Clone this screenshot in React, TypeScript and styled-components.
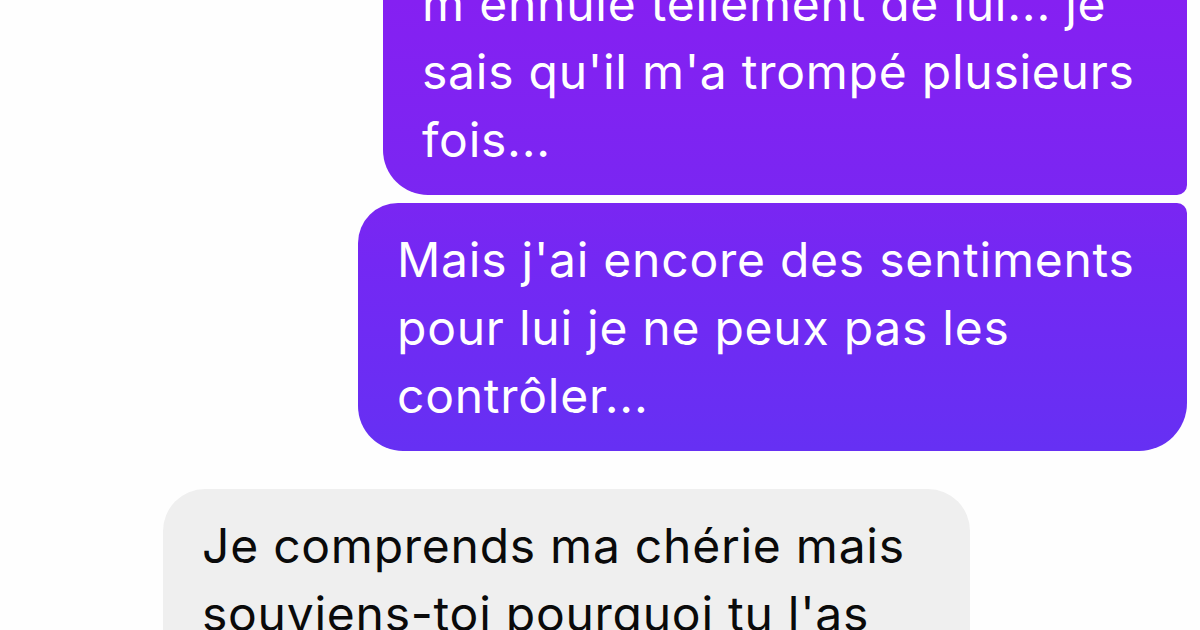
import styled, { createGlobalStyle } from 'styled-components'

const GlobalStyle = createGlobalStyle`
  html, body {
    margin: 0;
    padding: 0;
    background: #fefefe;
  }
  body {
    font-family: Inter, 'Noto Sans', 'Liberation Sans', sans-serif;
    -webkit-font-smoothing: antialiased;
  }
`

const Screen = styled.div`
  width: 1200px;
  height: 630px;
  overflow: hidden;
  background: #fefefe;
`

const Thread = styled.div`
  display: flex;
  flex-direction: column;
  margin-top: -53px;
  padding: 0 13px 0 163px;
`

const Row = styled.div<{ $mine?: boolean; $gap: number }>`
  display: flex;
  justify-content: ${(p) => (p.$mine ? 'flex-end' : 'flex-start')};
  margin-top: ${(p) => p.$gap}px;
`

const Bubble = styled.div<{ $mine?: boolean; $width: number; $radius: string }>`
  box-sizing: border-box;
  width: ${(p) => p.$width}px;
  padding: 23px 0 21px 39px;
  border-radius: ${(p) => p.$radius};
  font-size: 48px;
  line-height: 68px;
  font-weight: 400;
  letter-spacing: 0.75px;
  color: ${(p) => (p.$mine ? '#ffffff' : '#0a0a0a')};
  background: ${(p) =>
    p.$mine
      ? 'linear-gradient(180deg, #8520f2 0px, #7a26f2 200px, #7428f3 260px, #6630f3 450px) fixed'
      : '#efefef'};
`

const Line = styled.span`
  display: block;
  white-space: nowrap;
`

type Message = {
  mine?: boolean
  width: number
  radius: string
  gap: number
  lines: string[]
}

const messages: Message[] = [
  {
    mine: true,
    width: 804,
    radius: '45px 45px 10px 45px',
    gap: 0,
    lines: ["m'ennuie tellement de lui... je", "sais qu'il m'a trompé plusieurs", 'fois...'],
  },
  {
    mine: true,
    width: 829,
    radius: '40px 10px 48px 45px',
    gap: 8,
    lines: ["Mais j'ai encore des sentiments", 'pour lui je ne peux pas les', 'contrôler...'],
  },
  {
    width: 807,
    radius: '42px 42px 42px 42px',
    gap: 38,
    lines: ['Je comprends ma chérie mais', "souviens-toi pourquoi tu l'as", 'quitté...'],
  },
]

export default function App() {
  return (
    <>
      <GlobalStyle />
      <Screen>
        <Thread>
          {messages.map((m, i) => (
            <Row key={i} $mine={m.mine} $gap={m.gap}>
              <Bubble $mine={m.mine} $width={m.width} $radius={m.radius}>
                {m.lines.map((l) => (
                  <Line key={l}>{l}</Line>
                ))}
              </Bubble>
            </Row>
          ))}
        </Thread>
      </Screen>
    </>
  )
}
